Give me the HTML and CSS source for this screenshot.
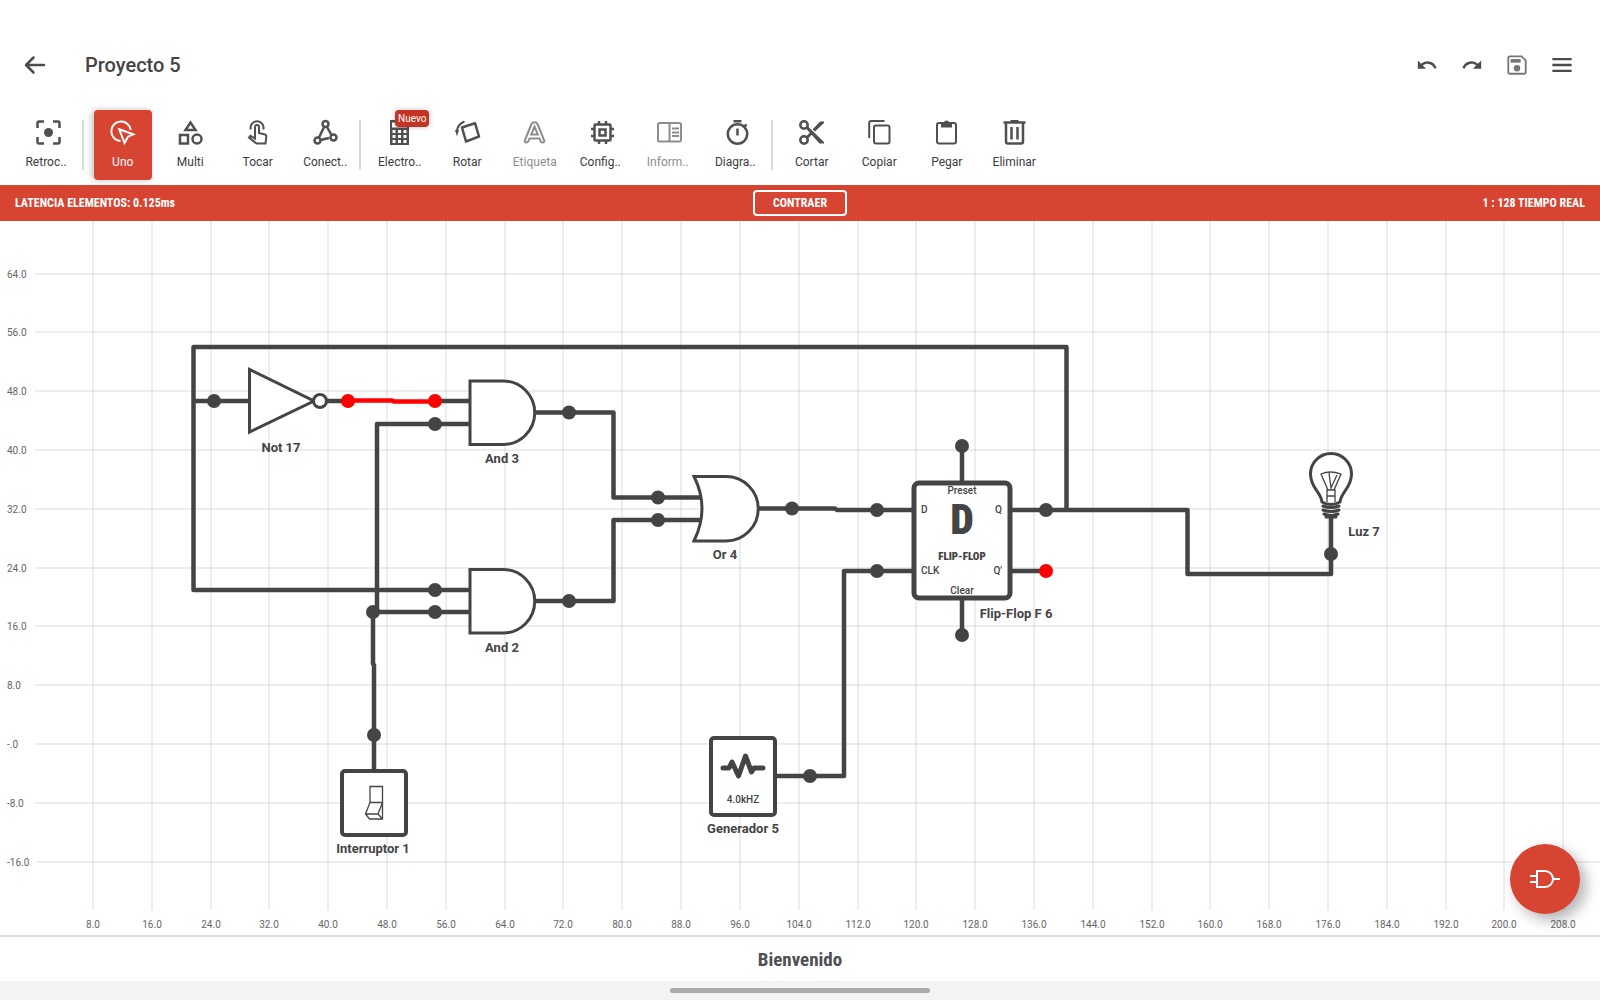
FILE: index.html
```html
<!DOCTYPE html>
<html lang="es">
<head>
<meta charset="utf-8">
<meta name="viewport" content="width=device-width, initial-scale=1">
<title>Proyecto 5</title>
<link rel="stylesheet" href="styles.css">
</head>
<body>
<header class="appbar">
  <button class="icon-btn" type="button" aria-label="Volver">
    <svg class="icon-lg" viewBox="0 0 24 24"><path class="line thick round" d="M21 12H3.500M10.500 4.500L3 12l7.500 7.500"/></svg>
  </button>
  <h1 class="title">Proyecto 5</h1>
  <div class="actions">
    <button class="icon-btn" type="button" aria-label="Deshacer">
      <svg class="icon-md" viewBox="0 0 24 24"><path class="solid" d="M12.500 8c-2.650 0-5.050.990-6.900 2.600L2 7v9h9l-3.620-3.620c1.390-1.160 3.160-1.880 5.120-1.880 3.540 0 6.550 2.310 7.600 5.500l2.370-.780C21.080 11.030 17.150 8 12.500 8z"/></svg>
    </button>
    <button class="icon-btn" type="button" aria-label="Rehacer">
      <svg class="icon-md" viewBox="0 0 24 24"><path class="solid" d="M18.400 10.600C16.550 8.990 14.150 8 11.500 8c-4.650 0-8.580 3.030-9.960 7.220L3.900 16c1.050-3.190 4.050-5.500 7.600-5.500 1.950 0 3.730.720 5.120 1.880L13 16h9V7l-3.600 3.600z"/></svg>
    </button>
    <button class="icon-btn dim" type="button" aria-label="Guardar">
      <svg class="icon-md" viewBox="0 0 24 24"><path class="line" d="M4 2.500h13L21.500 7V20a1.500 1.500 0 0 1-1.500 1.500H4A1.500 1.500 0 0 1 2.500 20V4A1.500 1.500 0 0 1 4 2.500z"/><path class="solid" d="M5 5.500h11v4H5z"/><circle class="solid" cx="12" cy="15.500" r="3.500"/></svg>
    </button>
    <button class="icon-btn" type="button" aria-label="Menú">
      <svg class="icon-md" viewBox="0 0 24 24"><path class="line bar" d="M1.500 5.500h21M1.500 12h21M1.500 18.500h21"/></svg>
    </button>
  </div>
</header>

<nav class="toolbar" aria-label="Herramientas">
  <div class="group one">
    <button class="tool clipped" type="button"><svg class="icon" viewBox="0 0 25 25"><path class="line thick" d="M1.500 8V3q0-1.500 1.500-1.500h5M17 1.500h5q1.500 0 1.500 1.500v5M23.500 17v5q0 1.500-1.500 1.500h-5M8 23.500H3q-1.500 0-1.500-1.500v-5"/><circle class="solid" cx="12.500" cy="12.500" r="4.500"/></svg><span>Retroc..</span></button>
  </div>
  <div class="group four">
    <button class="tool active" type="button" aria-pressed="true"><svg class="icon" viewBox="0 0 25 25"><path class="line" d="M10.500 21A9.800 9.800 0 1 1 20.800 10"/><path class="line" d="M9.300 9.300l14 5-5.300 2.400-3.500 6.300z"/></svg><span>Uno</span></button>
    <button class="tool" type="button"><svg class="icon" viewBox="0 0 25 25"><path class="line thick" d="M12.500 2.500l-5 7.500h10zM2 15h8v8.500H2z"/><circle class="line thick" cx="19" cy="19" r="4.500"/></svg><span>Multi</span></button>
    <button class="tool" type="button"><svg class="icon" viewBox="0 0 25 25"><path class="line" d="M5.800 9.500a6.500 6.500 0 1 1 12.500 0"/><path class="line" d="M10 18.500V7a2 2 0 0 1 4 0v6l6 1.500q1.500.500 1.300 2L20.500 23.500H11.500L4 17.500l1.500-1.700z"/></svg><span>Tocar</span></button>
    <button class="tool" type="button"><svg class="icon" viewBox="0 0 25 25"><path class="line thick" d="M10.800 7.500L6 17.500M14 7l4.500 8M7.500 20l8.500-2"/><circle class="line thick" cx="12.500" cy="4" r="3"/><circle class="line thick" cx="4.500" cy="20.500" r="3"/><circle class="line thick" cx="20.500" cy="17.500" r="3"/></svg><span>Conect..</span></button>
  </div>
  <div class="group six">
    <button class="tool" type="button"><svg class="icon" viewBox="0 0 25 25"><path class="solid" fill-rule="evenodd" d="M3 0h19v25H3zM5 2.500v5h15v-5zM5.500 10h3v3h-3zM11 10h3v3h-3zM16.500 10h3v3h-3zM5.500 15h3v3h-3zM11 15h3v3h-3zM16.500 15h3v3h-3zM5.500 20h3v3h-3zM11 20h3v3h-3zM16.500 20h3v3h-3z"/></svg><span>Electro..</span><em class="badge">Nuevo</em></button>
    <button class="tool" type="button"><svg class="icon" viewBox="0 0 25 25"><path class="line thick" stroke-linejoin="round" d="M7 7.500l13-4.300 4 13.300-13 5z"/><path class="line" d="M9.500 1.500Q2.500 4 1.800 12"/><path class="solid" d="M0 10h4l-2 6.500z"/></svg><span>Rotar</span></button>
    <button class="tool off" type="button" disabled><svg class="icon" viewBox="0 0 25 25"><path class="line" d="M2.800 20.500L9.500 4q.8-1.800 3-1.800T15.500 4l6.700 16.500q.500 2-1.500 2t-2.200-1.500l-1-2.500h-10l-1 2.500q-.700 1.500-2.200 1.500-2 0-1.500-2zM9.200 14.500h6.600L12.500 6.500z"/></svg><span>Etiqueta</span></button>
    <button class="tool clipped" type="button"><svg class="icon" viewBox="0 0 25 25"><rect class="line thick" x="4.500" y="4.500" width="16" height="16" rx="1"/><rect class="line thick" x="9.500" y="9.500" width="6" height="6"/><path class="line thick" d="M9 1v3M16 1v3M9 21v3M16 21v3M1 9h3M1 16h3M21 9h3M21 16h3"/></svg><span>Config..</span></button>
    <button class="tool clipped off" type="button" disabled><svg class="icon" viewBox="0 0 25 25"><rect class="line" x="1" y="3" width="23" height="18.500" rx="1.500"/><path class="line" d="M12.500 3v18M15 8.500h7M15 12.500h7M15 16h7"/></svg><span>Inform..</span></button>
    <button class="tool clipped" type="button"><svg class="icon" viewBox="0 0 25 25"><circle class="line thick" cx="12.500" cy="14" r="9.700"/><path class="line thick" d="M8.500 1.300h8M12.500 8.500v7M19 7l2.500-2.500"/></svg><span>Diagra..</span></button>
  </div>
  <div class="group four">
    <button class="tool" type="button"><svg class="icon" viewBox="0 0 25 25"><circle class="line thick" cx="5" cy="5" r="3.700"/><circle class="line thick" cx="5" cy="20" r="3.700"/><path class="solid" d="M7 8.500l2-2L25 22v1.500h-4.500zM7 16.500l4-4 2 2-4 4zM13.500 9.500L21 1.500h4V3l-9 8.500z"/></svg><span>Cortar</span></button>
    <button class="tool" type="button"><svg class="icon" viewBox="0 0 25 25"><rect class="line" x="7" y="5.500" width="15.500" height="18" rx="2"/><path class="line" d="M2.200 18V3q0-2 2-2H17.500"/></svg><span>Copiar</span></button>
    <button class="tool" type="button"><svg class="icon" viewBox="0 0 25 25"><rect class="line" x="3" y="3" width="19" height="20.500" rx="2"/><path class="solid" fill-rule="evenodd" d="M7 3h3a2.500 2.500 0 0 1 5 0h3v4.500H7zM11.500 3a1 1 0 0 0 2 0 1 1 0 0 0-2 0z"/></svg><span>Pegar</span></button>
    <button class="tool" type="button"><svg class="icon" viewBox="0 0 25 25"><path class="line thick" d="M1.500 2.500h22M8.500 1.200h8M4 2.500v19q0 2 2 2h13q2 0 2-2v-19M9.500 7v12.500M15.500 7v12.500"/></svg><span>Eliminar</span></button>
  </div>
</nav>

<section class="status">
  <span>LATENCIA ELEMENTOS: 0.125ms</span>
  <button class="collapse" type="button">CONTRAER</button>
  <span class="right">1 : 128 TIEMPO REAL</span>
</section>

<main class="canvas">
  <svg class="circuit" viewBox="0 221 1600 714" role="img" aria-label="Circuito">
    <path class="grid" d="M93 221V910M152 221V910M211 221V910M269 221V910M328 221V910M387 221V910M446 221V910M505 221V910M563 221V910M622 221V910M681 221V910M740 221V910M799 221V910M858 221V910M916 221V910M975 221V910M1034 221V910M1093 221V910M1152 221V910M1210 221V910M1269 221V910M1328 221V910M1387 221V910M1446 221V910M1504 221V910M1563 221V910"/>
    <path class="grid" d="M35 274H1600M35 332H1600M35 391H1600M35 450H1600M35 509H1600M35 568H1600M35 626H1600M35 685H1600M35 744H1600M35 803H1600M37 862H1600"/>
    <g class="axis">
      <text x="7" y="278">64.0</text><text x="7" y="336">56.0</text><text x="7" y="395">48.0</text><text x="7" y="454">40.0</text><text x="7" y="513">32.0</text><text x="7" y="572">24.0</text><text x="7" y="630">16.0</text><text x="7" y="689">8.0</text><text x="7" y="748">-.0</text><text x="7" y="807">-8.0</text><text x="7" y="866">-16.0</text>
    </g>
    <g class="axis mid">
      <text x="93" y="928">8.0</text><text x="152" y="928">16.0</text><text x="211" y="928">24.0</text><text x="269" y="928">32.0</text><text x="328" y="928">40.0</text><text x="387" y="928">48.0</text><text x="446" y="928">56.0</text><text x="505" y="928">64.0</text><text x="563" y="928">72.0</text><text x="622" y="928">80.0</text><text x="681" y="928">88.0</text><text x="740" y="928">96.0</text><text x="799" y="928">104.0</text><text x="858" y="928">112.0</text><text x="916" y="928">120.0</text><text x="975" y="928">128.0</text><text x="1034" y="928">136.0</text><text x="1093" y="928">144.0</text><text x="1152" y="928">152.0</text><text x="1210" y="928">160.0</text><text x="1269" y="928">168.0</text><text x="1328" y="928">176.0</text><text x="1387" y="928">184.0</text><text x="1446" y="928">192.0</text><text x="1504" y="928">200.0</text><text x="1563" y="928">208.0</text>
    </g>

    <path class="wire" d="M249 401H193M470 590H193.500V347H1066.500V510M326 401H348M434 401H470M470 424H377V612M470 612H373V664L374 665V770M533 412.500H613.500V497.500H703M533 601H613.500V520H703M756 508.500H835L837 510H914M914 571H844V776H775M962 446V484M962 635V597M1009 571H1046M1009 510H1187.500V574H1331V518"/>
    <path class="wire hot" d="M348 400.500H392L394 401.500H434"/>
    <path class="gate" d="M249.500 369.500V432L314 401zM470 381H503A31 31 0 0 1 503 444.500H470zM470 569.500H503A31 31 0 0 1 503 633H470zM694 476.500H726A32 32 0 0 1 726 541H694Q710 508 694 476.500z"/>
    <circle class="gate" cx="320" cy="401" r="6.500"/>
    <rect class="gate box" x="342" y="771" width="64" height="64" rx="3"/>
    <rect class="gate box" x="711" y="738" width="64" height="77" rx="3"/>
    <rect class="gate chip" x="914" y="483" width="96" height="115" rx="5"/>
    <g class="pins">
      <circle cx="214" cy="401" r="7"/><circle cx="435" cy="424" r="7"/><circle cx="569" cy="412.500" r="7"/><circle cx="658" cy="497.500" r="7"/><circle cx="658" cy="520" r="7"/><circle cx="435" cy="590" r="7"/><circle cx="435" cy="612" r="7"/><circle cx="569" cy="601" r="7"/><circle cx="373" cy="612" r="7"/><circle cx="374" cy="735" r="7"/><circle cx="792" cy="508.500" r="7"/><circle cx="877" cy="510" r="7"/><circle cx="877" cy="571" r="7"/><circle cx="962" cy="446" r="7"/><circle cx="962" cy="635" r="7"/><circle cx="1046" cy="510" r="7"/><circle cx="810" cy="776" r="7"/><circle cx="1331" cy="554" r="7"/>
      <circle class="on" cx="348" cy="401" r="7"/><circle class="on" cx="435" cy="401" r="7"/><circle class="on" cx="1046" cy="571" r="7"/>
    </g>
    <path class="fine" d="M370 786.500H382.500V819H369.500L365.500 814L370 802.500zM370 802.500H382.500L378 814H365.500M378 814L382.500 819"/>
    <path class="pulse" d="M723 768H729L732 762L738.500 776L745.500 756L751.500 772L754 768H763"/>
    <path class="bulb" d="M1322 502C1321 492 1310.500 488 1310.500 474A20.500 20.500 0 0 1 1351.500 474C1351.500 488 1341 492 1340 502Q1331 507 1322 502z"/>
    <path class="fine" d="M1327 502V490H1335V502M1327 496H1335M1328 490L1321 474Q1330 470 1341 474L1334 490M1329 473L1331 488L1337 475"/>
    <path class="screw" d="M1323 506Q1331 509 1339 506M1323 510Q1331 513 1339 510M1324 514Q1331 517 1338 514M1326 517H1336"/>

    <g class="names">
      <text x="281" y="452">Not 17</text><text x="502" y="463">And 3</text><text x="502" y="652">And 2</text><text x="725" y="559">Or 4</text><text x="373" y="853">Interruptor 1</text><text x="743" y="833">Generador 5</text><text x="1016" y="618">Flip-Flop F 6</text><text x="1364" y="536">Luz 7</text>
    </g>
    <g class="ports">
      <text class="mid" x="962" y="494">Preset</text><text class="mid" x="962" y="594">Clear</text><text x="921" y="513">D</text><text x="921" y="574">CLK</text><text class="end" x="1002" y="513">Q</text><text class="end" x="1002" y="574">Q'</text><text class="mid" x="743" y="803">4.0kHZ</text>
    </g>
    <text class="mark" x="962" y="534">D</text>
    <text class="mark small" x="962" y="560">FLIP-FLOP</text>
  </svg>
  <button class="fab" type="button" aria-label="Añadir puerta">
    <svg class="fab-icon" viewBox="0 0 30 20"><path class="line" d="M7 2H15A8 8 0 0 1 15 18H7zM0 7H7M0 13H7M23 10H30"/></svg>
  </button>
</main>

<footer class="welcome">Bienvenido</footer>
<div class="gesture"><div class="pill"></div></div>
</body>
</html>
```
FILE: styles.css
```css
* { box-sizing: border-box; }

body {
  margin: 0;
  min-height: 100vh;
  display: flex;
  flex-direction: column;
  background: #fff;
  color: #444;
  font-family: Roboto, "Liberation Sans", sans-serif;
}

button {
  padding: 0;
  border: 0;
  background: none;
  color: inherit;
  font: inherit;
}

svg { display: block; }
.line { fill: none; stroke: currentColor; stroke-width: 2; }
.line.thick { stroke-width: 2.5; }
.line.bar { stroke-width: 2.5; }
.line.round { stroke-linecap: round; stroke-linejoin: round; }
.solid { fill: currentColor; }

.appbar {
  display: flex;
  align-items: center;
  height: 100px;
  padding: 30px 15px 0;
  color: #4c4c4c;
}
.icon-btn {
  display: grid;
  place-items: center;
  width: 40px;
  height: 40px;
}
.icon-lg { width: 24px; height: 24px; }
.icon-md { width: 22px; height: 22px; }
.dim { color: #777; }
.title {
  margin: 0 0 0 30px;
  font-size: 20px;
  line-height: 24px;
  font-weight: 500;
  color: #444;
}
.actions {
  display: flex;
  gap: 5px;
  margin-left: auto;
  padding-right: 3px;
}

.toolbar {
  display: flex;
  height: 85px;
  padding: 10px 19px 5px;
}
.group {
  display: grid;
  gap: 10px;
  position: relative;
}
.group + .group { margin-left: 17px; }
.group + .group::before {
  content: "";
  position: absolute;
  top: 10px;
  left: -12px;
  width: 2px;
  height: 50px;
  background: #d8d8d8;
}
.one { width: 58px; }
.four { width: 260px; grid-template-columns: repeat(4, 1fr); }
.six { width: 395px; grid-template-columns: repeat(6, 1fr); }
.tool {
  position: relative;
  display: flex;
  flex-direction: column;
  align-items: center;
  gap: 9px;
  padding-top: 10px;
  border-radius: 4px;
  color: #505050;
  font-size: 12px;
  line-height: 16px;
}
.tool span { color: #3c3c3c; }
.clipped span { padding-right: 4px; }
.off, .off span { color: #8e8e8e; }
.active {
  background: #d74432;
  box-shadow: -2px 0 6px rgba(0, 0, 0, .25);
}
.active, .active span { color: #fff; }
.icon { width: 25px; height: 25px; overflow: visible; }
.badge {
  position: absolute;
  top: 0;
  left: 24px;
  padding: 0 3px;
  border-radius: 4px;
  background: #c43425;
  box-shadow: 0 0 5px rgba(0, 0, 0, .25);
  color: #fff;
  font-size: 10px;
  line-height: 17px;
  font-style: normal;
}

.status {
  display: grid;
  grid-template-columns: 1fr auto 1fr;
  align-items: center;
  height: 36px;
  padding: 0 15px;
  background: #d74432;
  color: #fff;
  font: 700 12px/16px "Roboto Condensed", "Liberation Sans Narrow", Roboto, sans-serif;
}
.right { text-align: right; }
.collapse {
  width: 94px;
  height: 26px;
  border: 2px solid #fff;
  border-radius: 4px;
}

.canvas {
  position: relative;
  flex: 1;
}
.circuit { width: 100%; height: auto; }
.grid { fill: none; stroke: rgba(0, 0, 0, .07); stroke-width: 2; }
.axis { font-size: 10px; fill: #666; }
.mid { text-anchor: middle; }
.end { text-anchor: end; }
.wire { fill: none; stroke: #444; stroke-width: 4.5; stroke-linejoin: round; }
.hot { stroke: #f00; }
.gate { fill: #fff; stroke: #444; stroke-width: 3; }
.box { stroke-width: 4; }
.chip { stroke-width: 5; }
.pins { fill: #444; }
.on { fill: #f00; }
.fine { fill: none; stroke: #444; stroke-width: 1.3; }
.pulse { fill: none; stroke: #444; stroke-width: 5; stroke-linejoin: round; stroke-linecap: round; }
.bulb { fill: #fff; stroke: #444; stroke-width: 3; }
.screw { fill: none; stroke: #444; stroke-width: 3; stroke-linecap: round; }
.names { font-size: 13px; font-weight: 700; fill: #444; text-anchor: middle; }
.ports { font-size: 10px; font-weight: 500; fill: #444; }
.mark {
  font: 900 42px "Roboto Condensed", "Liberation Sans Narrow", Roboto, sans-serif;
  fill: #444;
  text-anchor: middle;
}
.mark.small { font-size: 11px; }

.fab {
  position: absolute;
  right: 20px;
  bottom: 21px;
  display: grid;
  place-items: center;
  width: 70px;
  height: 70px;
  border-radius: 50%;
  background: #d74432;
  box-shadow: 6px 6px 14px rgba(0, 0, 0, .3);
  color: #fff;
}
.fab-icon { width: 30px; height: 20px; }

.welcome {
  height: 46px;
  border-top: 2px solid #ddd;
  text-align: center;
  font: 700 19px/46px "Roboto Condensed", "Liberation Sans Narrow", Roboto, sans-serif;
  color: #505050;
}
.gesture {
  display: grid;
  place-items: center;
  height: 19px;
  background: #f4f4f6;
}
.pill {
  width: 260px;
  height: 5px;
  border-radius: 3px;
  background: #aaa;
}
```
